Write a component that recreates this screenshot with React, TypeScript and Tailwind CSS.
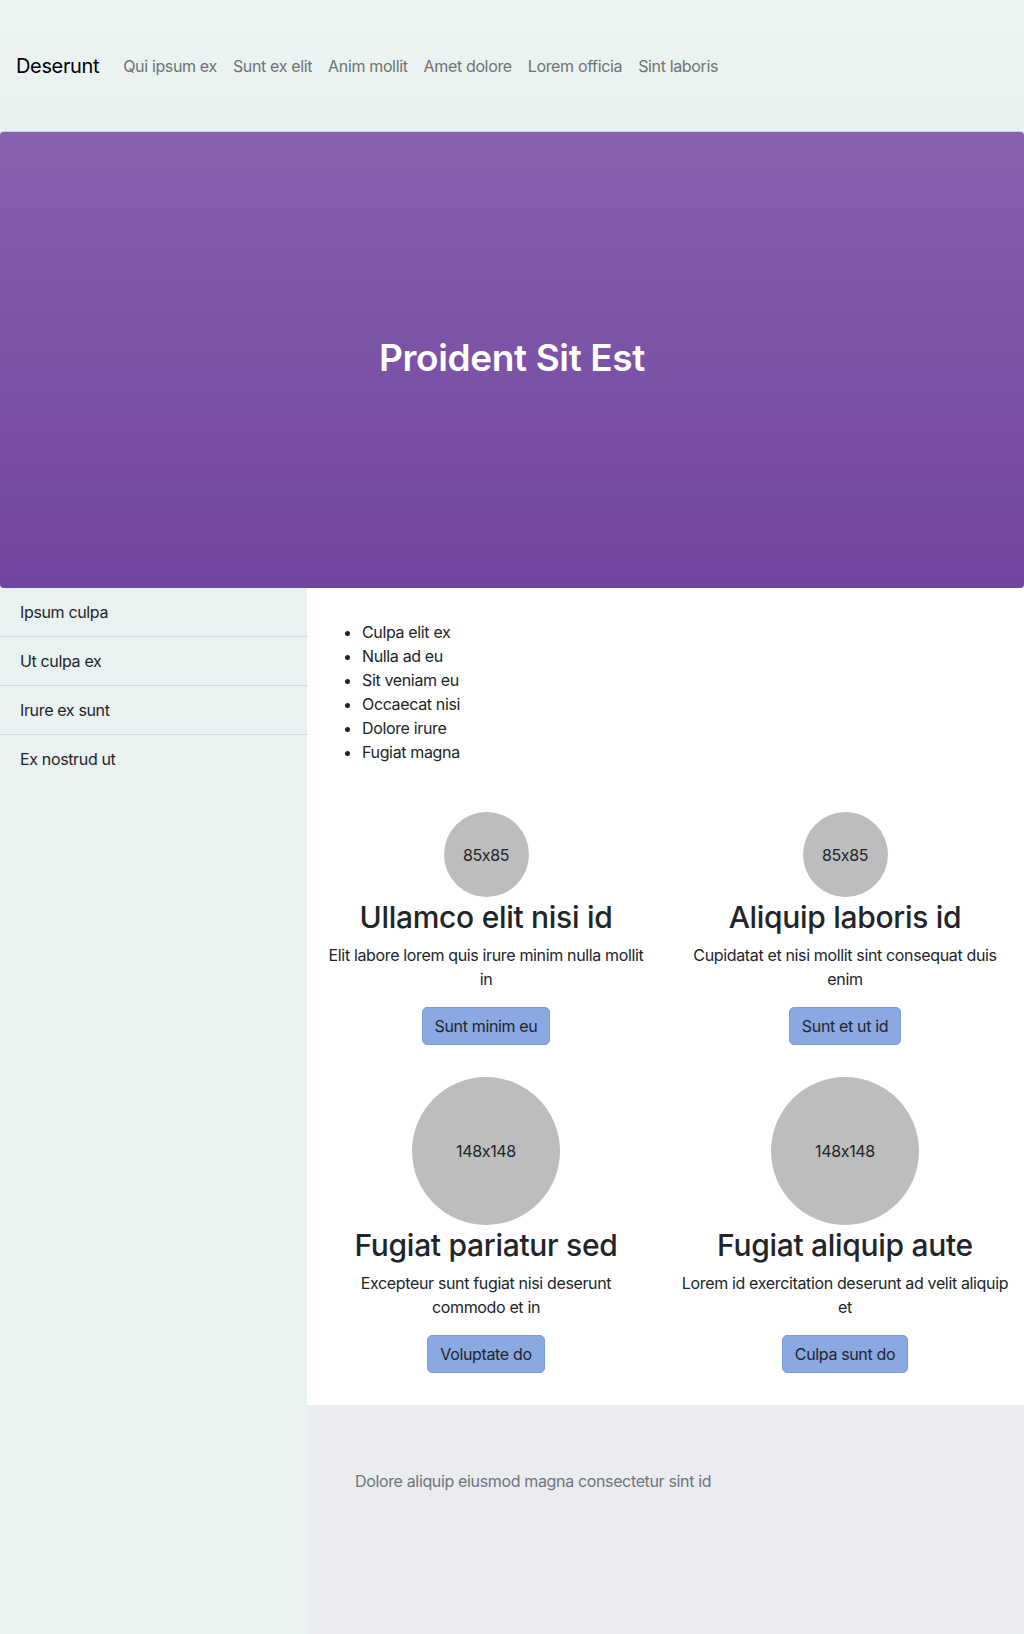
import React from 'react';

const navLinks = ['Qui ipsum ex', 'Sunt ex elit', 'Anim mollit', 'Amet dolore', 'Lorem officia', 'Sint laboris'];
const sideItems = ['Ipsum culpa', 'Ut culpa ex', 'Irure ex sunt', 'Ex nostrud ut'];
const listItems = ['Culpa elit ex', 'Nulla ad eu', 'Sit veniam eu', 'Occaecat nisi', 'Dolore irure', 'Fugiat magna'];

const cards = [
  { size: 85, title: 'Ullamco elit nisi id', text: 'Elit labore lorem quis irure minim nulla mollit in', button: 'Sunt minim eu' },
  { size: 85, title: 'Aliquip laboris id', text: 'Cupidatat et nisi mollit sint consequat duis enim', button: 'Sunt et ut id' },
  { size: 148, title: 'Fugiat pariatur sed', text: 'Excepteur sunt fugiat nisi deserunt commodo et in', button: 'Voluptate do' },
  { size: 148, title: 'Fugiat aliquip aute', text: 'Lorem id exercitation deserunt ad velit aliquip et', button: 'Culpa sunt do' },
];

const Card: React.FC<{ size: number; title: string; text: string; button: string }> = ({ size, title, text, button }) => (
  <div className="flex flex-col items-center text-center">
    <div
      className="rounded-full bg-[#bdbdbd] flex items-center justify-center text-[16px] text-[#212529] mb-0.5 [font-feature-settings:'calt'_0]"
      style={{ width: size, height: size }}
    >
      {size}x{size}
    </div>
    <h2 className="text-[30px] leading-[36px] font-medium tracking-[-0.01em] text-[#212529] mb-2 whitespace-nowrap">{title}</h2>
    <p className="text-[16px] leading-6 text-[#212529] mb-4">{text}</p>
    <button className="h-[38px] px-3 rounded-[5px] bg-[#8aa9e2] border border-[#7b9bd9] text-[16px] text-[#212529]">
      {button}
    </button>
  </div>
);

export default function App() {
  return (
    <div className="min-h-screen flex flex-col bg-[#e8f1f0] font-['Inter',sans-serif] tracking-[-0.022em]">
      <nav className="h-[131px] flex items-center px-4 bg-gradient-to-b from-[#edf5f4] to-[#e7f1f0]">
        <span className="text-[20px] text-black mr-4">Deserunt</span>
        <div className="flex">
          {navLinks.map((l) => (
            <a key={l} className="px-2 text-[16px] text-[#6e7272]">{l}</a>
          ))}
        </div>
      </nav>

      <header className="h-[457px] rounded-[4px] border-t border-[#cfc6dc] bg-gradient-to-b from-[#8761ae] to-[#70459f] flex items-center justify-center">
        <h1 className="text-[37px] font-semibold tracking-[-0.01em] text-white pb-1">Proident Sit Est</h1>
      </header>

      <div className="flex-1 flex">
        <aside className="w-[307px] shrink-0 bg-[#e9f2f1] rounded-tr-[4px]">
          {sideItems.map((s, i) => (
            <div
              key={s}
              className={`px-5 py-3 text-[16px] leading-6 text-[#212529] ${i < sideItems.length - 1 ? 'border-b border-[#d3d8da]' : ''}`}
            >
              {s}
            </div>
          ))}
        </aside>

        <div className="flex-1 flex flex-col">
          <main className="bg-white pl-[19px] pr-3 pt-8 pb-8">
            <ul className="list-disc pl-9 text-[16px] leading-6 text-[#212529]">
              {listItems.map((i) => (
                <li key={i}>{i}</li>
              ))}
            </ul>
            <div className="grid grid-cols-[320px_334px] gap-x-8 gap-y-8 mt-12">
              {cards.map((c) => (
                <Card key={c.title} {...c} />
              ))}
            </div>
          </main>
          <footer className="flex-1 bg-[#eaecef] rounded-[4px] px-12 pt-16 pb-16">
            <p className="text-[16px] leading-6 text-[#6c757d]">Dolore aliquip eiusmod magna consectetur sint id</p>
          </footer>
        </div>
      </div>
    </div>
  );
}
